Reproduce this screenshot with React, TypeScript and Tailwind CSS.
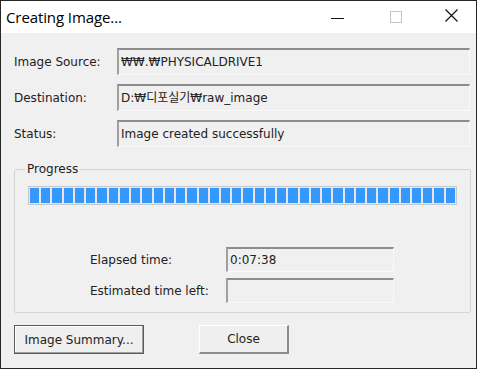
import React from "react";

const ui = "font-['Tahoma','DejaVu_Sans','Noto_Sans_CJK_KR',sans-serif] text-[12px] text-[#222]";

const fields = [
  { label: "Image Source:", value: "₩₩.₩PHYSICALDRIVE1" },
  { label: "Destination:", value: "D:₩디포실기₩raw_image" },
  { label: "Status:", value: "Image created successfully" },
];

function Sunken({ value, className }: { value?: string; className: string }) {
  return (
    <div className={`flex items-center shrink-0 border-t-2 border-l-2 border-t-[#8c8c8c] border-l-[#a0a0a0] border-r border-b border-r-[#fafafa] border-b-[#fafafa] bg-[#f0f0f0] pl-[2px] whitespace-nowrap overflow-hidden ${className}`}>
      {value}
    </div>
  );
}

function Button({ label, primary }: { label: string; primary?: boolean }) {
  return (
    <button
      className={`flex items-center justify-center h-[29px] bg-[#efefef] ${ui} ${
        primary
          ? "w-[130px] border border-[#5a5a5a] shadow-[inset_-1px_-1px_0_#a0a0a0,inset_1px_1px_0_#ffffff]"
          : "w-[90px] border-t border-l border-t-[#ffffff] border-l-[#ffffff] border-r-2 border-b-2 border-r-[#8c8c8c] border-b-[#8c8c8c]"
      }`}
    >
      {label}
    </button>
  );
}

export default function App() {
  const segs = Array.from({ length: 38 }, (_, i) => i);

  return (
    <div className="w-[480px] h-[371px] bg-white">
      <div className="w-[477px] h-[369px] border border-[#262626] flex flex-col">
        {/* title bar */}
        <div className="h-[32px] bg-white flex items-center shrink-0">
          <span className="pl-[5px] font-['Open_Sans','Noto_Sans',sans-serif] text-[15px] text-black tracking-[-0.1px]">
            Creating Image...
          </span>
          <div className="ml-auto flex items-center h-full">
            <div className="w-[58px] flex justify-center">
              <div className="w-[13px] h-px bg-[#111] mt-[2px]" />
            </div>
            <div className="w-[60px] flex justify-center">
              <div className="w-[12px] h-[12px] border border-[#c4c4c4]" />
            </div>
            <div className="w-[50px] flex justify-center">
              <svg width="13" height="13" viewBox="0 0 13 13" className="mb-[3px]">
                <path d="M0.5 0.5 L12.5 12.5 M12.5 0.5 L0.5 12.5" stroke="#111" strokeWidth="1.2" />
              </svg>
            </div>
          </div>
        </div>

        {/* body */}
        <div className={`flex-1 bg-[#f0f0f0] flex flex-col pl-[13px] pt-[15px] ${ui}`}>
          <div className="flex flex-col gap-[9px]">
            {fields.map((f) => (
              <div key={f.label} className="flex items-center h-[27px]">
                <span className="w-[103px] shrink-0">{f.label}</span>
                <Sunken value={f.value} className="w-[353px] h-[27px]" />
              </div>
            ))}
          </div>

          <fieldset className="mt-[13px] w-[456px] h-[153px] border border-[#d4d4d4] rounded-[2px] px-[13px]">
            <legend className="ml-[-3px] px-[2px] text-[12px]">Progress</legend>
            <div className="mt-[8px] h-[19px] w-[429px] border border-[#c8c8c8] bg-[#e6e6e6] flex gap-[2px] p-[1px]">
              {segs.map((i) => (
                <div key={i} className="flex-1 bg-[#3399ff]" />
              ))}
            </div>
            <div className="mt-[42px] flex flex-col gap-[6px] pl-[62px]">
              <div className="flex items-center h-[25px]">
                <span className="w-[136px]">Elapsed time:</span>
                <Sunken value="0:07:38" className="w-[168px] h-[25px]" />
              </div>
              <div className="flex items-center h-[25px]">
                <span className="w-[136px]">Estimated time left:</span>
                <Sunken className="w-[168px] h-[25px]" />
              </div>
            </div>
          </fieldset>

          <div className="mt-[12px] flex gap-[55px]">
            <Button label="Image Summary..." primary />
            <Button label="Close" />
          </div>
        </div>
      </div>
    </div>
  );
}
